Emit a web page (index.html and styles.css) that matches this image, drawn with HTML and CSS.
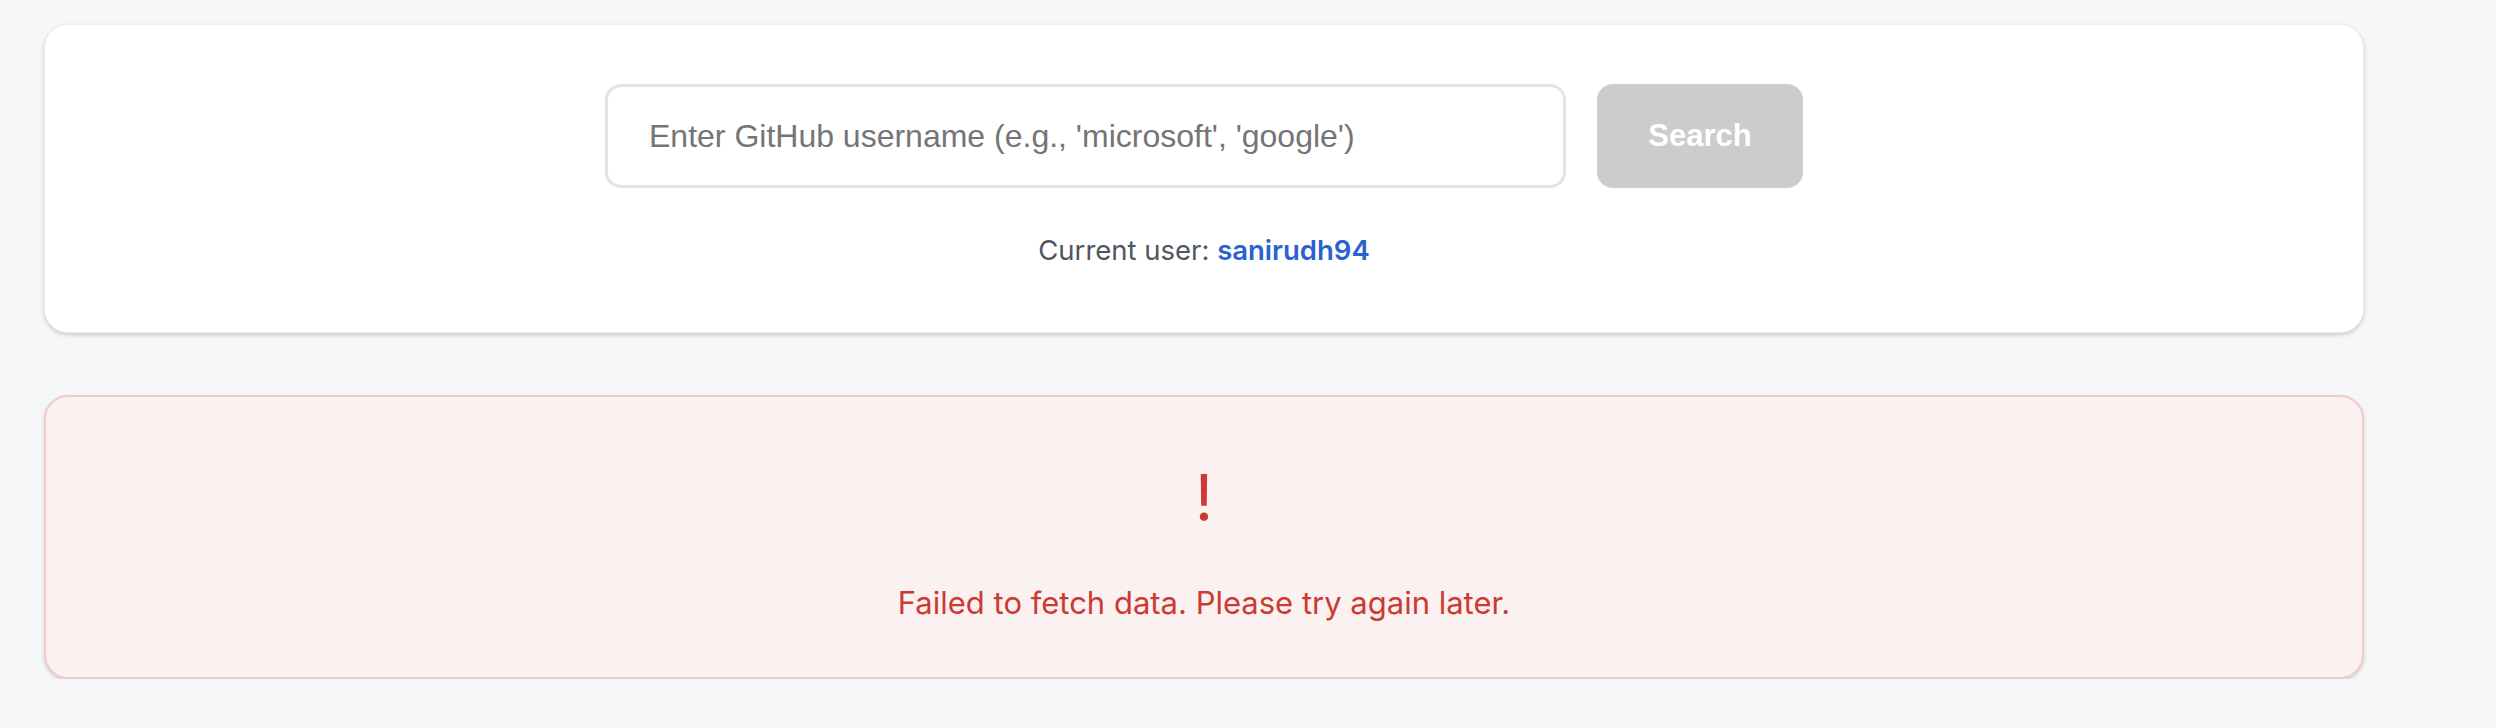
FILE: index.html
```html
<!DOCTYPE html>
<html lang="en">
<head>
<meta charset="utf-8">
<title>GitHub User Search</title>
<link rel="stylesheet" href="styles.css">
</head>
<body>
<main class="container">
  <section class="search-card">
    <form class="search-form" onsubmit="return false;">
      <input class="search-input" type="text" placeholder="Enter GitHub username (e.g., 'microsoft', 'google')">
      <button class="search-button" type="submit" disabled>Search</button>
    </form>
    <p class="current-user">Current user: <span class="username">sanirudh94</span></p>
  </section>
  <section class="error-card">
    <div class="error-icon">!</div>
    <p class="error-text">Failed to fetch data. Please try again later.</p>
  </section>
</main>
</body>
</html>
```

FILE: styles.css
```css
* {
  box-sizing: border-box;
}

body {
  margin: 0;
  background: #f6f7f9;
  font-family: Inter, "Noto Sans", "Liberation Sans", sans-serif;
}

.container {
  width: 2320px;
  margin-left: 44px;
  padding-top: 24px;
  display: flex;
  flex-direction: column;
  gap: 62px;
}

.search-card {
  background: #ffffff;
  border-radius: 24px;
  border: 1px solid #eceef1;
  box-shadow: 0 2px 4px rgba(0, 0, 0, 0.18);
  height: 309px;
  padding-top: 59px;
  display: flex;
  flex-direction: column;
  align-items: center;
}

.search-form {
  display: flex;
  gap: 31px;
  width: 1198px;
}

.search-input {
  width: 961px;
  height: 104px;
  border: 3px solid #e2e3e8;
  border-radius: 16px;
  padding: 0 41px;
  font-family: "Liberation Sans", Arial, sans-serif;
  font-size: 32px;
  color: #333;
  background: #fff;
  outline: none;
}

.search-input::placeholder {
  color: #757575;
}

.search-button {
  width: 206px;
  height: 104px;
  border: none;
  border-radius: 16px;
  background: #cccccc;
  color: #ffffff;
  font-family: "Liberation Sans", Arial, sans-serif;
  font-weight: bold;
  font-size: 31px;
}

.current-user {
  margin: 43px 0 0;
  font-size: 27.5px;
  line-height: 39px;
  color: #50565e;
}

.username {
  color: #2a62cf;
  font-weight: 600;
}

.error-card {
  background: #fcf1f1;
  border: 2px solid #f3cacb;
  border-radius: 24px;
  box-shadow: 0 2px 4px rgba(0, 0, 0, 0.16);
  height: 284px;
  padding-top: 69px;
  display: flex;
  flex-direction: column;
  align-items: center;
  color: #cb3a33;
}

.error-icon {
  font-size: 64px;
  line-height: 64px;
  font-weight: 400;
}

.error-text {
  margin: 52px 0 0;
  font-size: 31px;
  line-height: 42px;
}
```
